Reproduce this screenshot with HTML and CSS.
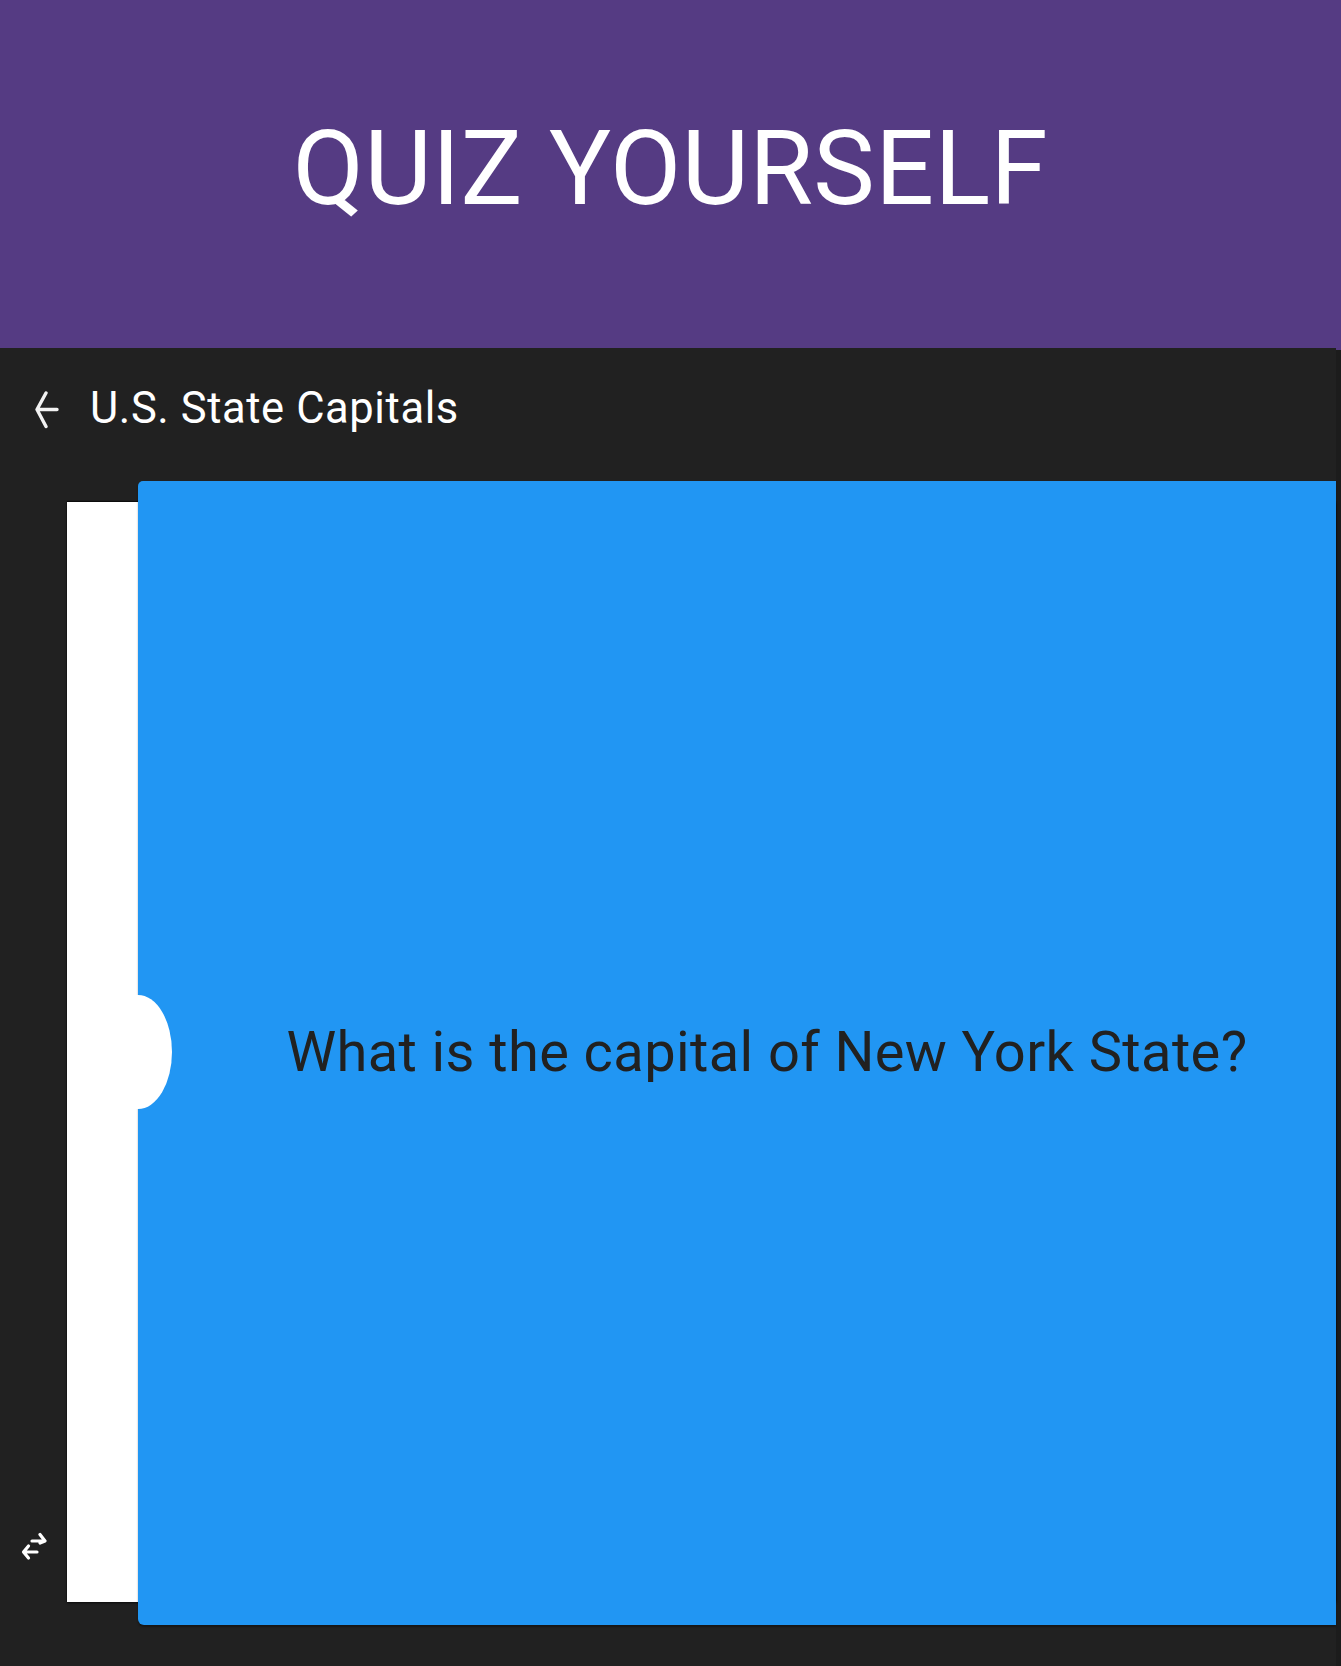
FILE: index.html
```html
<!DOCTYPE html>
<html lang="en">
<head>
<meta charset="utf-8">
<title>Quiz Yourself</title>
<link rel="stylesheet" href="styles.css">
</head>
<body>
<div class="page">
  <header class="hero">
    <h1 class="hero-title">QUIZ YOURSELF</h1>
  </header>
  <main class="quiz">
    <div class="toolbar">
      <svg class="back-icon" viewBox="0 0 24 38" width="24" height="38" aria-hidden="true">
        <path d="M22 18.5H2.5M11 2L2 18.5L11 35.5" fill="none" stroke="#f2f2f2" stroke-width="3.4" stroke-linecap="round" stroke-linejoin="round"/>
      </svg>
      <h2 class="deck-title">U.S. State Capitals</h2>
    </div>
    <div class="stage">
      <div class="side">
        <svg class="swap-icon" viewBox="0 0 26 32" width="26" height="32" aria-hidden="true">
          <path d="M11 10H23M19 3.5L24 10L19 12" fill="none" stroke="#ffffff" stroke-width="3.2" stroke-linecap="round" stroke-linejoin="round"/>
          <path d="M16 21H3.5M7.5 15L2.5 21L7.5 27" fill="none" stroke="#ffffff" stroke-width="3.2" stroke-linecap="round" stroke-linejoin="round"/>
        </svg>
      </div>
      <div class="deck">
        <div class="card-back"></div>
        <div class="card-front">
          <span class="notch"></span>
          <p class="question">What is the capital of New York State?</p>
        </div>
      </div>
    </div>
  </main>
</div>
</body>
</html>
```

FILE: styles.css
```css
html, body {
  margin: 0;
  padding: 0;
}
body {
  background: #1c1c1c;
  font-family: Roboto, "Liberation Sans", Arial, sans-serif;
  height: 1666px;
  overflow: hidden;
}
.page {
  width: 1341px;
}
.hero {
  height: 350px;
  background: #553b83;
  display: flex;
  align-items: center;
  justify-content: center;
  margin-bottom: -2px;
}
.hero-title {
  margin: 0;
  color: #ffffff;
  font-weight: 400;
  font-size: 103.5px;
  line-height: 1;
  letter-spacing: 0.4px;
  padding-bottom: 12px;
}
.quiz {
  width: 1336px;
  background: #212121;
  height: 1318px;
}
.toolbar {
  height: 133px;
  display: flex;
  align-items: flex-start;
  box-sizing: border-box;
  padding-top: 41px;
}
.back-icon {
  margin-left: 35px;
  margin-top: 2px;
  flex: none;
}
.deck-title {
  margin: -5px 0 0 31px;
  color: #ffffff;
  font-weight: 400;
  font-size: 43.5px;
  line-height: 50px;
  letter-spacing: 0.6px;
}
.stage {
  display: flex;
  height: 1144px;
}
.side {
  width: 67px;
  flex: none;
  display: flex;
  align-items: flex-end;
}
.swap-icon {
  margin: 0 0 62px 21px;
}
.deck {
  flex: 1;
  display: grid;
}
.card-back {
  grid-area: 1 / 1;
  background: #ffffff;
  margin: 21px 0 23px 0;
  box-shadow: 0 -1px 1px rgba(0,0,0,0.6), 0 1px 2px rgba(0,0,0,0.7);
}
.card-front {
  grid-area: 1 / 1;
  margin-left: 71px;
  background: #2196f3;
  border-radius: 5px 0 0 6px;
  box-shadow: 0 2px 2px rgba(0,0,0,0.35);
  position: relative;
  display: flex;
  align-items: center;
  justify-content: center;
  padding-left: 60px;
}
.notch {
  position: absolute;
  left: -34px;
  top: 514px;
  width: 68px;
  height: 114px;
  border-radius: 50%;
  background: #ffffff;
}
.question {
  margin: 0;
  color: #212121;
  font-size: 56px;
  font-weight: 400;
  letter-spacing: 0.4px;
  line-height: 1.2;
}
```
